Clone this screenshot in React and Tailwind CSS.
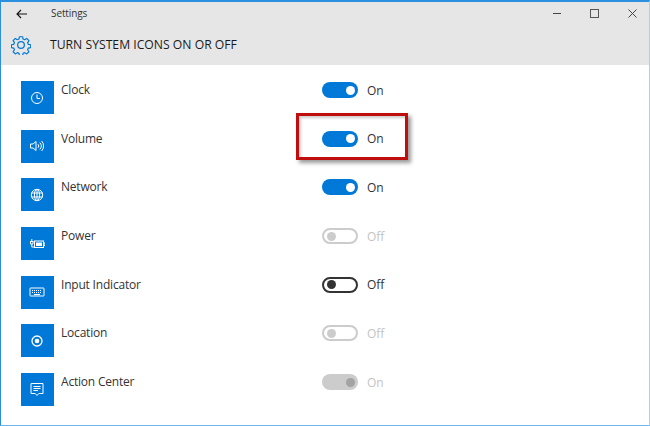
const icons = {
  clock: <g fill="none" stroke="#fff" strokeWidth="1"><circle cx="8" cy="8" r="5.500"/><path d="M8 4.500V8.500H11"/></g>,
  volume: <g fill="none" stroke="#fff" strokeWidth="1"><path d="M1.500 6H4L7 3.500V12.500L4 10H1.500Z"/><path d="M9 6.200a2.600 2.600 0 0 1 0 3.600M10.800 4.600a5 5 0 0 1 0 6.800M12.600 3a7.300 7.300 0 0 1 0 10"/></g>,
  globe: <g fill="none" stroke="#fff" strokeWidth="1"><circle cx="8" cy="8" r="5.700"/><ellipse cx="8" cy="8" rx="2.600" ry="5.700"/><path d="M2.500 6H13.500M2.500 10H13.500M8 2.300V13.700"/></g>,
  power: <g fill="none" stroke="#fff"><rect x="5.500" y="5" width="9" height="6.500" strokeWidth="1"/><rect x="7" y="6.500" width="6" height="3.500" fill="#fff" stroke="none"/><path d="M14.500 7H16V9.500H14.500" strokeWidth="1"/><path d="M1 5.500H4.500M1.500 5.500V8H4V5.500M2.800 3V5.500M2.800 8V11H5" strokeWidth="1"/></g>,
  keyboard: <g fill="none" stroke="#fff" strokeWidth="1"><rect x="1" y="4" width="14" height="8" rx="0.500"/><path d="M3 6.500H13M3 8.500H13" strokeDasharray="1 1"/><path d="M5 10.500H11"/></g>,
  location: <g fill="none"><circle cx="8" cy="8" r="5" stroke="#fff" strokeWidth="1.300"/><circle cx="8" cy="8" r="2.300" fill="#fff"/></g>,
  action: <g fill="none" stroke="#fff" strokeWidth="1"><path d="M2 1.500H14V11.500H9.800L8 13.500L6.200 11.500H2Z"/><path d="M4.500 4.500H11.500M4.500 6.500H11.500M4.500 8.500H9"/></g>,
};

const rows = [
  { label: "Clock", icon: "clock", state: "on", text: "On" },
  { label: "Volume", icon: "volume", state: "on", text: "On" },
  { label: "Network", icon: "globe", state: "on", text: "On" },
  { label: "Power", icon: "power", state: "disabledOff", text: "Off" },
  { label: "Input Indicator", icon: "keyboard", state: "off", text: "Off" },
  { label: "Location", icon: "location", state: "disabledOff", text: "Off" },
  { label: "Action Center", icon: "action", state: "disabledOn", text: "On" },
];

function Toggle({ state }) {
  if (state === "on")
    return (
      <div className="w-[36px] h-[16px] rounded-full bg-[#0078d7] flex items-center justify-end pr-[3px]">
        <div className="w-[9px] h-[9px] rounded-full bg-white" />
      </div>
    );
  if (state === "disabledOn")
    return (
      <div className="w-[36px] h-[16px] rounded-full bg-[#cccccc] flex items-center justify-end pr-[3px]">
        <div className="w-[9px] h-[9px] rounded-full bg-[#a3a3a3]" />
      </div>
    );
  if (state === "off")
    return (
      <div className="w-[36px] h-[16px] rounded-full border-2 border-[#333333] flex items-center pl-[3px]">
        <div className="w-[9px] h-[9px] rounded-full bg-[#333333]" />
      </div>
    );
  return (
    <div className="w-[36px] h-[16px] rounded-full border-2 border-[#cccccc] flex items-center pl-[3px]">
      <div className="w-[9px] h-[9px] rounded-full bg-[#cccccc]" />
    </div>
  );
}

export default function App() {
  return (
    <div className="relative w-[650px] h-[426px] bg-white overflow-hidden border-l border-b border-r border-t-2 border-l-[#2b90e0] border-b-[#6fb4ea] border-r-[#a9d2f2] border-t-[#2b90e0] font-['Open_Sans','Noto_Sans',sans-serif]">
      <div className="h-[63px] bg-[#e6e6e6] flex flex-col">
        <div className="h-[23px] flex items-center">
          <svg width="11" height="10" viewBox="0 0 11 10" className="ml-[15px]" fill="none" stroke="#111" strokeWidth="1.100">
            <path d="M1 5H11M5 1L1 5L5 9" />
          </svg>
          <span className="ml-[24px] text-[10px] text-[#333333] font-['Open_Sans',sans-serif] tracking-[-0.100px]">Settings</span>
          <div className="ml-auto flex items-center pr-[12px]">
            <div className="w-[8px] h-[1.500px] bg-[#444444] mr-[29px]" />
            <div className="w-[9px] h-[9px] border-[1.500px] border-[#555555] mr-[29px]" />
            <svg width="9" height="9" viewBox="0 0 9 9" stroke="#444" strokeWidth="1" fill="none">
              <path d="M0.500 0.500L8.500 8.500M8.500 0.500L0.500 8.500" />
            </svg>
          </div>
        </div>
        <div className="flex items-center h-[32px] mt-[4px]">
          <svg width="20" height="20" viewBox="0 0 24 24" className="ml-[10px]" fill="none" stroke="#0078d7" strokeWidth="1.500" strokeLinejoin="round">
            <path d="M10 2h4l.6 3 2.100 .9 2.600-1.700 2.800 2.800-1.700 2.600 .9 2.100 3 .6v3.600l-3 .6-.9 2.100 1.700 2.600-2.800 2.800-2.600-1.700-2.100 .9-.6 3h-4l-.6-3-2.100-.9-2.600 1.700-2.800-2.800 1.700-2.600-.9-2.100-3-.6v-3.600l3-.6 .9-2.100-1.700-2.600 2.800-2.800 2.600 1.700 2.100-.9z" transform="scale(0.94) translate(0.800 0.200)" />
            <circle cx="12" cy="12" r="4" />
          </svg>
          <h1 className="ml-[19px] pt-[1px] text-[12.200px] font-medium text-[#1a1a1a] font-['Open_Sans',sans-serif]">TURN SYSTEM ICONS ON OR OFF</h1>
        </div>
      </div>
      <div className="pt-[16px] flex flex-col">
        {rows.map((r) => (
          <div key={r.label} className="h-[48.700px] flex items-start pl-[19.500px]">
            <div className="w-[33px] h-[33px] bg-[#0078d7] flex items-center justify-center shrink-0">
              <svg width="16" height="16" viewBox="0 0 16 16">{icons[r.icon]}</svg>
            </div>
            <div className="w-[268.500px] pl-[7.500px] pt-[1px] text-[12px] leading-[16px] text-[#333333] font-['Open_Sans',sans-serif] tracking-[-0.200px]">{r.label}</div>
            <div className="flex items-center h-[18px]">
              <Toggle state={r.state} />
              <span className={"ml-[9px] pt-[1px] text-[12px] leading-[16px] font-['Open_Sans',sans-serif] " + (r.state === "on" || r.state === "off" ? "text-[#333333]" : "text-[#c4c4c4]")}>{r.text}</span>
            </div>
          </div>
        ))}
      </div>
      <div className="absolute left-[295px] top-[111px] w-[112px] h-[47px] border-[3px] border-[#c00d0d] shadow-[3px_3px_4px_rgba(0,0,0,0.4),inset_2px_2px_3px_rgba(0,0,0,0.2)]" />
    </div>
  );
}
